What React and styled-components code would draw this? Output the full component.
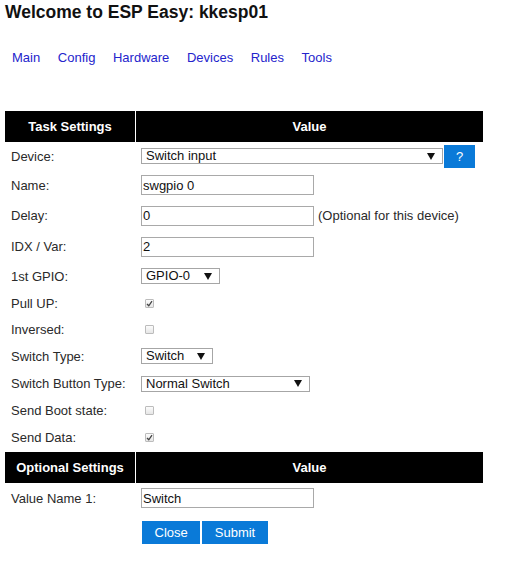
import React from 'react'
import styled, { createGlobalStyle } from 'styled-components'

const GlobalStyle = createGlobalStyle`
  body {
    margin: 0;
    background: #fff;
    font-family: "Liberation Sans", Arial, sans-serif;
    font-size: 13px;
    color: #222;
  }
`;

const Page = styled.div`
  padding: 0 5px;
  width: 478px;`;

const Title = styled.h1`
  margin: 2px 0 0;
  font-size: 17.5px;
  line-height: 20px;
  font-weight: bold;
  color: #111;`;

const Nav = styled.nav`
  margin-top: 27.5px;
  display: flex;
  gap: 3.6px;
  line-height: 15px;`;

const NavLink = styled.a`
  padding: 0 7px;
  color: #2424cc;
  text-decoration: none;
  cursor: pointer;`;

const Table = styled.div`
  margin-top: 46.5px;
  display: flex;
  flex-direction: column;`;

const Head = styled.div`
  display: grid;
  grid-template-columns: 130px 1fr;
  column-gap: 1px;
  height: 31px;
  margin-top: ${({ $gap }) => $gap || 0}px;`;

const HeadCell = styled.div`
  background: #000;
  color: #fff;
  font-weight: bold;
  display: flex;
  align-items: center;
  justify-content: center;`;

const Row = styled.div`
  display: grid;
  grid-template-columns: 130px 1fr;
  column-gap: 1px;
  height: ${({ $h }) => $h}px;
  align-items: center;`;

const Label = styled.div`
  padding-left: 6px;
  color: #2a2a2a;`;

const Value = styled.div`
  padding-left: 5px;
  display: flex;
  align-items: center;
  gap: ${({ $gap }) => $gap ?? 4}px;`;

const Input = styled.input`
  box-sizing: border-box;
  width: 173px;
  height: 20px;
  border: 1px solid #a9a9a9;
  padding: 0 1px;
  font: 13px "Liberation Sans", Arial, sans-serif;
  color: #111;
  outline: none;`;

const Hint = styled.span`
  color: #2a2a2a;`;

const SelectBox = styled.div`
  box-sizing: border-box;
  width: ${({ $w }) => $w}px;
  height: 16px;
  border: 1px solid #a6a6a6;
  padding: 0 7px 0 4px;
  display: flex;
  align-items: center;
  justify-content: space-between;
  line-height: 14px;
  color: #111;`;

const Check = styled.span`
  box-sizing: border-box;
  margin-left: 4px;
  width: 9px;
  height: 9px;
  border: 1px solid #bcbcbc;
  border-radius: 1px;
  background: linear-gradient(#fcfcfc, #e6e6e6);
  display: flex;
  align-items: center;
  justify-content: center;`;

const Button = styled.button`
  height: 23px;
  margin-left: ${({ $flush }) => ($flush ? 0 : 1)}px;
  padding: 0 ${({ $narrow }) => ($narrow ? 12 : 12.5)}px;
  border: none;
  border-radius: 0;
  background: #0a7ad8;
  color: #fff;
  font: 13px "Liberation Sans", Arial, sans-serif;
  cursor: pointer;`;

const Buttons = styled.div`
  margin-top: 8px;
  padding-left: 136px;
  display: flex;
  gap: 1px;`;

const Arrow = () => (
  <svg width="8" height="7" viewBox="0 0 8 7">
    <polygon points="0,0 8,0 4,7" fill="#111" />
  </svg>
);

const Select = ({ w, children }) => (
  <SelectBox $w={w}>
    <span>{children}</span>
    <Arrow />
  </SelectBox>
);

const Checkbox = ({ checked }) => (
  <Check>
    {checked && (
      <svg width="7" height="7" viewBox="0 0 7 7">
        <path d="M1 4 L2.8 5.8 L6 1.2" stroke="#444" strokeWidth="1.3" fill="none" />
      </svg>
    )}
  </Check>
);

const menu = ['Main', 'Config', 'Hardware', 'Devices', 'Rules', 'Tools'];

export default function App() {
  return (
    <>
      <GlobalStyle />
      <Page>
        <Title>Welcome to ESP Easy: kkesp01</Title>
        <Nav>
          {menu.map((m) => <NavLink key={m}>{m}</NavLink>)}
        </Nav>
        <Table>
          <Head>
            <HeadCell>Task Settings</HeadCell>
            <HeadCell>Value</HeadCell>
          </Head>
          <Row $h={28}>
            <Label>Device:</Label>
            <Value $gap={1}>
              <Select w={302}>Switch input</Select>
              <Button $flush $narrow>?</Button>
            </Value>
          </Row>
          <Row $h={30}>
            <Label>Name:</Label>
            <Value><Input defaultValue="swgpio 0" /></Value>
          </Row>
          <Row $h={31}>
            <Label>Delay:</Label>
            <Value>
              <Input defaultValue="0" />
              <Hint>(Optional for this device)</Hint>
            </Value>
          </Row>
          <Row $h={31}>
            <Label>IDX / Var:</Label>
            <Value><Input defaultValue="2" /></Value>
          </Row>
          <Row $h={28}>
            <Label>1st GPIO:</Label>
            <Value><Select w={79}>GPIO-0</Select></Value>
          </Row>
          <Row $h={26}>
            <Label>Pull UP:</Label>
            <Value><Checkbox checked /></Value>
          </Row>
          <Row $h={26}>
            <Label>Inversed:</Label>
            <Value><Checkbox /></Value>
          </Row>
          <Row $h={28}>
            <Label>Switch Type:</Label>
            <Value><Select w={72}>Switch</Select></Value>
          </Row>
          <Row $h={27}>
            <Label>Switch Button Type:</Label>
            <Value><Select w={169}>Normal Switch</Select></Value>
          </Row>
          <Row $h={27}>
            <Label>Send Boot state:</Label>
            <Value><Checkbox /></Value>
          </Row>
          <Row $h={26}>
            <Label>Send Data:</Label>
            <Value><Checkbox checked /></Value>
          </Row>
          <Head $gap={2}>
            <HeadCell>Optional Settings</HeadCell>
            <HeadCell>Value</HeadCell>
          </Head>
          <Row $h={30}>
            <Label>Value Name 1:</Label>
            <Value><Input defaultValue="Switch" /></Value>
          </Row>
          <Buttons>
            <Button>Close</Button>
            <Button>Submit</Button>
          </Buttons>
        </Table>
      </Page>
    </>
  );
}
